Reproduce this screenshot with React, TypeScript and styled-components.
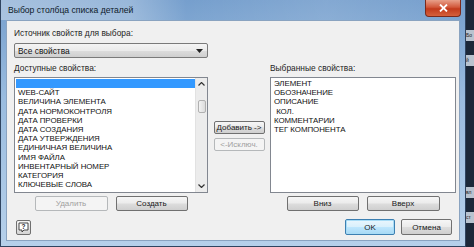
import styled, { createGlobalStyle, css } from "styled-components";

const GlobalStyle = createGlobalStyle`
  html, body {
    margin: 0;
    padding: 0;
    background: #1c2839;
    overflow: hidden;
  }
  body {
    font-family: "Liberation Sans", Arial, sans-serif;
  }
`;

const Screen = styled.div`
  display: flex;
  width: 474px;
  height: 247px;
`;

const Window = styled.div`
  width: 466px;
  height: 247px;
  display: flex;
  flex-direction: column;
  box-sizing: border-box;
  border: 1px solid #2f4460;
  border-top: none;
  background: linear-gradient(180deg, #769fcd 0%, #9abcdf 40%, #b6d0ea 100%);
`;

const TitleBar = styled.div`
  height: 20px;
  display: flex;
  align-items: flex-start;
  justify-content: space-between;
  background: linear-gradient(90deg, rgba(255, 255, 255, 0.35) 0%, rgba(255, 255, 255, 0.25) 28%, rgba(255, 255, 255, 0) 40%, rgba(255, 255, 255, 0.1) 70%, rgba(255, 255, 255, 0) 100%);
`;

const Title = styled.span`
  font-size: 8.6px;
  line-height: 20px;
  padding-left: 7px;
  color: #0e1a2a;
`;

const CloseBox = styled.div`
  width: 34px;
  height: 16px;
  margin-right: 4px;
  display: flex;
  align-items: center;
  justify-content: center;
  border: 1px solid #7a2a1c;
  border-top: none;
  border-radius: 0 0 4px 4px;
  background: linear-gradient(180deg, #e8a08a 0%, #d2583b 45%, #c23a1c 55%, #d5613c 100%);
`;

const Client = styled.div`
  flex: 1;
  margin: 0 5px 5px 5px;
  background: #f0f0f0;
  border: 1px solid #8aa3c0;
  padding: 7px 5px 0 7px;
  display: flex;
  flex-direction: column;
`;

const Label = styled.div`
  font-size: 8.4px;
  line-height: 11px;
  color: #1e1e1e;
  white-space: nowrap;
`;

const Select = styled.div`
  margin-top: 4px;
  width: 194px;
  height: 15px;
  box-sizing: border-box;
  border: 1px solid #7a7a7a;
  border-radius: 2px;
  background: linear-gradient(180deg, #f4f4f4 0%, #ebebeb 50%, #dddddd 51%, #cfcfcf 100%);
  display: flex;
  align-items: center;
  justify-content: space-between;
  padding: 0 4px 0 3px;
  font-size: 8.4px;
  color: #111;
`;

const Columns = styled.div`
  margin-top: 5px;
  display: grid;
  grid-template-columns: 194px 62px 186px;
  grid-template-rows: 11px 116px 15px;
  row-gap: 3px;
`;

const ListBox = styled.div`
  box-sizing: border-box;
  border: 1px solid #828790;
  background: #ffffff;
  display: flex;
  overflow: hidden;
`;

const Items = styled.div`
  flex: 1;
  padding: 1px 0 0 1px;
  display: flex;
  flex-direction: column;
`;

const Item = styled.div<{ $selected?: boolean }>`
  height: 9.2px;
  line-height: 9.2px;
  font-size: 7.9px;
  letter-spacing: -0.05px;
  padding-left: 2px;
  color: #111;
  white-space: pre;
  ${(p) =>
    p.$selected &&
    css`
      background: #3399ff;
      color: #fff;
    `}
`;

const Scrollbar = styled.div`
  width: 11px;
  background: #ececec;
  border-left: 1px solid #e2e2e2;
  display: flex;
  flex-direction: column;
  align-items: center;
`;

const ScrollArrow = styled.div`
  height: 12px;
  width: 11px;
  display: flex;
  align-items: center;
  justify-content: center;
`;

const Thumb = styled.div`
  margin-top: 10px;
  width: 8px;
  height: 13px;
  box-sizing: border-box;
  border: 1px solid #b0b0b0;
  border-radius: 2px;
  background: linear-gradient(90deg, #f2f2f2, #dcdcdc);
`;

const Spacer = styled.div<{ $h?: number }>`
  flex: ${(p) => (p.$h ? "none" : "1")};
  height: ${(p) => (p.$h ? `${p.$h}px` : "auto")};
`;

const Middle = styled.div`
  display: flex;
  flex-direction: column;
  align-items: center;
  padding-top: 44px;
  gap: 4px;
`;

const Button = styled.div<{ $w: number; $h?: number; $disabled?: boolean; $default?: boolean }>`
  width: ${(p) => p.$w}px;
  height: ${(p) => p.$h ?? 15}px;
  box-sizing: border-box;
  border: 1px solid #707070;
  border-radius: 2px;
  background: linear-gradient(180deg, #f6f6f6 0%, #ebebeb 48%, #dddddd 52%, #cfcfcf 100%);
  display: flex;
  align-items: center;
  justify-content: center;
  font-size: 8px;
  color: #1a1a1a;
  white-space: nowrap;
  ${(p) =>
    p.$disabled &&
    css`
      border-color: #b5b8ba;
      background: #f4f4f4;
      color: #a0a0a0;
    `}
  ${(p) =>
    p.$default &&
    css`
      border-color: #3c7fb1;
      background: linear-gradient(180deg, #eaf6fd 0%, #d9f0fc 48%, #bee6fd 52%, #a7d9f5 100%);
      box-shadow: inset 0 0 0 1px #a8dcf6;
    `}
`;

const ButtonRow = styled.div`
  display: flex;
  justify-content: center;
  gap: 8px;
`;

const Footer = styled.div`
  margin-top: 8px;
  display: flex;
  align-items: center;
  padding: 0 2px 0 2px;
`;

const HelpButton = styled.div`
  width: 15px;
  height: 15px;
  box-sizing: border-box;
  border: 1px solid #6f6f6f;
  border-radius: 2px;
  background: linear-gradient(180deg, #f4f4f4, #d4d4d4);
  display: flex;
  align-items: center;
  justify-content: center;
`;

const FooterRight = styled.div`
  margin-left: auto;
  display: flex;
  gap: 6px;
`;

const Desktop = styled.div`
  flex: 1;
  display: flex;
  flex-direction: column;
  padding-top: 30px;
  gap: 14px;
  overflow: hidden;
`;

const Fragment = styled.div`
  height: 11px;
  background: #b9c3cf;
  font-size: 5px;
  line-height: 11px;
  color: #222;
  white-space: nowrap;
`;

const Chevron = ({ up }: { up?: boolean }) => (
  <svg width="7" height="4" viewBox="0 0 7 4">
    <path d={up ? "M0.5 3.5 L3.5 0.5 L6.5 3.5" : "M0.5 0.5 L3.5 3.5 L6.5 0.5"} fill="none" stroke="#333" strokeWidth="1.2" />
  </svg>
);

const available = [
  "",
  "WEB-САЙТ",
  "ВЕЛИЧИНА ЭЛЕМЕНТА",
  "ДАТА НОРМОКОНТРОЛЯ",
  "ДАТА ПРОВЕРКИ",
  "ДАТА СОЗДАНИЯ",
  "ДАТА УТВЕРЖДЕНИЯ",
  "ЕДИНИЧНАЯ ВЕЛИЧИНА",
  "ИМЯ ФАЙЛА",
  "ИНВЕНТАРНЫЙ НОМЕР",
  "КАТЕГОРИЯ",
  "КЛЮЧЕВЫЕ СЛОВА",
];

const selected = ["ЭЛЕМЕНТ", "ОБОЗНАЧЕНИЕ", "ОПИСАНИЕ", " КОЛ.", "КОММЕНТАРИИ", "ТЕГ КОМПОНЕНТА"];

export default function App() {
  return (
    <>
      <GlobalStyle />
      <Screen>
        <Window>
          <TitleBar>
            <Title>Выбор столбца списка деталей</Title>
            <CloseBox>
              <svg width="9" height="8" viewBox="0 0 9 8">
                <path d="M1 0.5 L8 7.5 M8 0.5 L1 7.5" stroke="#fff" strokeWidth="1.8" />
              </svg>
            </CloseBox>
          </TitleBar>
          <Client>
            <Label>Источник свойств для выбора:</Label>
            <Select>
              <span>Все свойства</span>
              <svg width="7" height="4" viewBox="0 0 7 4">
                <path d="M0 0 L7 0 L3.5 4 Z" fill="#222" />
              </svg>
            </Select>
            <Columns>
              <Label>Доступные свойства:</Label>
              <div />
              <Label>Выбранные свойства:</Label>

              <ListBox>
                <Items>
                  {available.map((name, i) => (
                    <Item key={i} $selected={i === 0}>
                      {name}
                    </Item>
                  ))}
                </Items>
                <Scrollbar>
                  <ScrollArrow>
                    <Chevron up />
                  </ScrollArrow>
                  <Thumb />
                  <Spacer />
                  <ScrollArrow>
                    <Chevron />
                  </ScrollArrow>
                </Scrollbar>
              </ListBox>
              <Middle>
                <Button $w={51} $h={13}>Добавить -&gt;</Button>
                <Button $w={51} $h={13} $disabled>
                  &lt;-Исключ.
                </Button>
              </Middle>
              <ListBox>
                <Items>
                  {selected.map((name) => (
                    <Item key={name}>{name}</Item>
                  ))}
                </Items>
              </ListBox>

              <ButtonRow>
                <Button $w={73} $disabled>
                  Удалить
                </Button>
                <Button $w={72}>Создать</Button>
              </ButtonRow>
              <div />
              <ButtonRow>
                <Button $w={72}>Вниз</Button>
                <Button $w={73}>Вверх</Button>
              </ButtonRow>
            </Columns>
            <Footer>
              <HelpButton>
                <svg width="11" height="11" viewBox="0 0 11 11">
                  <path d="M1 1 H10 V8 H6 L4 10 V8 H1 Z" fill="#fff" stroke="#333" strokeWidth="0.9" />
                  <text x="5.5" y="7" fontSize="6.5" fontFamily="Liberation Sans" fontWeight="bold" textAnchor="middle" fill="#222">
                    ?
                  </text>
                </svg>
              </HelpButton>
              <FooterRight>
                <Button $w={50} $h={16} $default>
                  OK
                </Button>
                <Button $w={51} $h={16}>Отмена</Button>
              </FooterRight>
            </Footer>
          </Client>
        </Window>
        <Desktop>
          <Fragment>Бо</Fragment>
          <Fragment>й</Fragment>
          <Spacer />
          <Fragment>вл</Fragment>
          <Fragment>ст</Fragment>
          <Spacer $h={10} />
        </Desktop>
      </Screen>
    </>
  );
}
